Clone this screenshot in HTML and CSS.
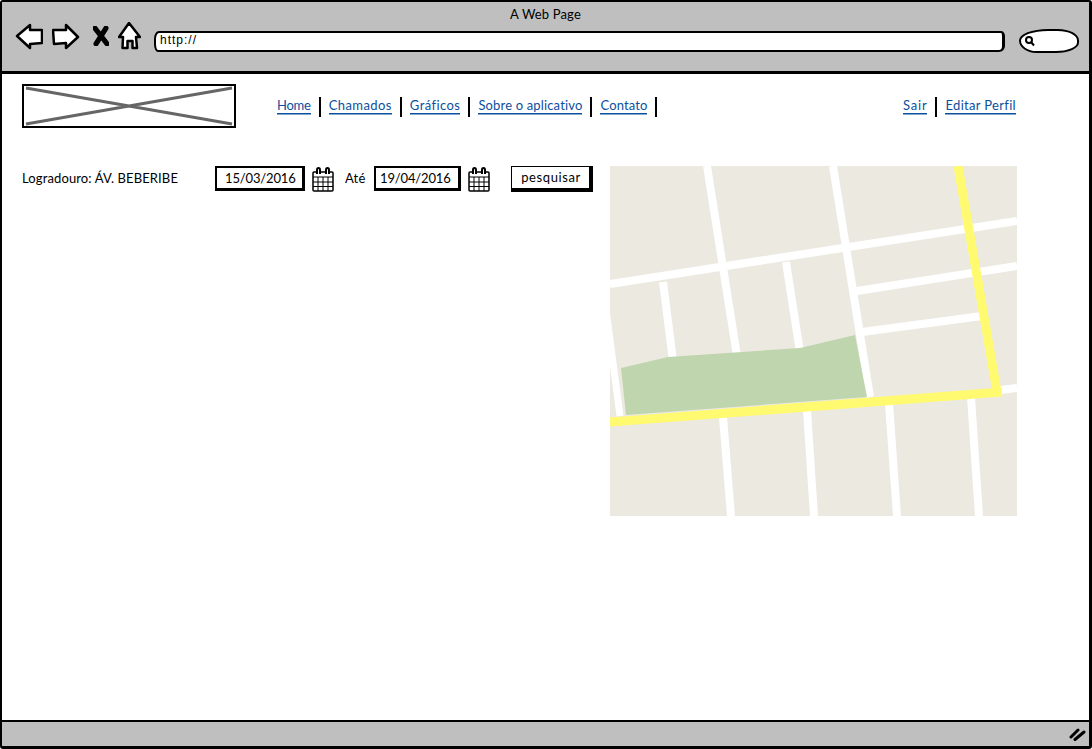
FILE: index.html
```html
<!DOCTYPE html>
<html lang="en">
<head>
    <meta charset="UTF-8">
    <meta name="viewport" content="width=device-width, initial-scale=1.0">
    <title>A Web Page</title>
    <link rel="stylesheet" href="styles.css">
</head>
<body>

    <div class="browser">
        <header class="chrome">
            <div class="page-title">A Web Page</div>
            <div class="toolbar">
                <svg class="icon-arrow" viewBox="0 0 28 27"><path d="M2 13L15 2V7H27V20L15 21V25Z"/></svg>
                <svg class="icon-arrow icon-forward" viewBox="0 0 28 27"><path d="M1 7H14V2L26 14L14 25V20L2 21Z"/></svg>
                <svg class="icon-stop" viewBox="0 0 16 18" preserveAspectRatio="none"><path d="M2 2L14 16M13 2L3 16"/></svg>
                <svg class="icon-home" viewBox="0 0 23 28"><path d="M11 1L1 15H5L4.500 26H9.500V19H14.500V26H19L18 15H22Z"/></svg>
                <div class="url-bar">http://</div>
                <div class="search-box">
                    <svg class="icon-search" viewBox="0 0 12 12"><circle cx="5" cy="5" r="3"/><path d="M7 7L10 10.500"/></svg>
                </div>
            </div>
        </header>

        <main class="content">
            <div class="top-row">
                <div class="logo">
                    <svg viewBox="0 0 210 40" preserveAspectRatio="none"><path d="M2 2L208 38M208 2L2 38"/></svg>
                </div>
                <nav class="nav">
                    <a href="#">Home</a>
                    <a href="#">Chamados</a>
                    <a href="#">Gráficos</a>
                    <a href="#">Sobre o aplicativo</a>
                    <a href="#">Contato</a>
                </nav>
                <nav class="nav nav-right">
                    <a href="#">Sair</a>
                    <a href="#">Editar Perfil</a>
                </nav>
            </div>

            <div class="body-row">
                <form class="filters">
                    <span class="street">Logradouro: ÁV. BEBERIBE</span>
                    <div class="date-box">15/03/2016</div>
                    <svg class="icon-cal" viewBox="0 0 22 25">
                        <rect x="1" y="5" width="20" height="19" rx="1"/>
                        <path d="M1 10H21M1 15H21M1 19.500H21M6 10V24M11 10V24M16 10V24"/>
                        <path class="rings" d="M5 7V3Q5 1 6.500 1T8 3V7M14 7V3Q14 1 15.500 1T17 3V7"/>
                    </svg>
                    <span class="until">Até</span>
                    <div class="date-box date-box-end">19/04/2016</div>
                    <svg class="icon-cal" viewBox="0 0 22 25">
                        <rect x="1" y="5" width="20" height="19" rx="1"/>
                        <path d="M1 10H21M1 15H21M1 19.500H21M6 10V24M11 10V24M16 10V24"/>
                        <path class="rings" d="M5 7V3Q5 1 6.500 1T8 3V7M14 7V3Q14 1 15.500 1T17 3V7"/>
                    </svg>
                    <button type="button" class="search-btn">pesquisar</button>
                </form>

                <svg class="map" viewBox="0 0 407 350">
                    <rect class="land" width="407" height="350"/>
                    <path class="road" d="M0 118L407 55M97 0L127 190M223 0L260 231M53 116L63 195M176 96L190 186M247 125L407 100M252 166L372 150M390 224L407 222M113 251L121 350M197 244L204 350M279 237L287 350M361 231L369 350"/>
                    <path class="road road-thin" d="M-4 144L10 250"/>
                    <path class="park" d="M11 202L58 191L190 182L245 169L257 231L16 249Z"/>
                    <path class="highway" d="M348 0L387 226M0 256L392 226"/>
                </svg>
            </div>
        </main>

        <footer class="status-bar">
            <svg class="icon-grip" viewBox="0 0 17 13"><path d="M2 9L9 2M6 11.500L15 4"/></svg>
        </footer>
    </div>

</body>
</html>
```

FILE: styles.css
```css
* {
    box-sizing: border-box;
}
body {
    margin: 0;
    font-family: "Lato", "Open Sans", sans-serif;
    font-size: 13px;
    color: #000;
    background-color: #fff;
}
svg {
    display: block;
    flex: none;
}
.browser {
    display: flex;
    flex-direction: column;
    height: 749px;
    border: solid #000;
    border-width: 2px 3px 3px 2px;
    border-radius: 3px;
}

/* browser chrome */
.chrome {
    height: 72px;
    padding-top: 5px;
    background-color: #bfbfbf;
    border-bottom: 3px solid #000;
}
.page-title {
    text-align: center;
    line-height: 14px;
    letter-spacing: 0.15px;
}
.toolbar {
    display: flex;
    align-items: center;
    height: 30px;
    padding-left: 13px;
}
.toolbar svg path, .toolbar svg circle {
    fill: #fff;
    stroke: #000;
    stroke-width: 2.500;
    stroke-linejoin: round;
}
.icon-arrow {
    width: 28px;
    height: 27px;
}
.icon-forward {
    margin-left: 9px;
}
.icon-stop {
    width: 16px;
    height: 20px;
    margin-left: 13px;
}
.toolbar .icon-stop path {
    fill: none;
    stroke-width: 5;
    stroke-linecap: round;
}
.icon-home {
    width: 23px;
    height: 28px;
    margin-left: 9px;
}
.url-bar {
    width: 851px;
    height: 21px;
    margin: 10px 0 0 13px;
    padding-left: 4px;
    background-color: #fff;
    border: 2px solid #000;
    border-width: 2px 3px 2.500px 2.500px;
    border-radius: 5px 4px 6px 4px / 8px 5px 6px 8px;
    font-family: "Liberation Sans", Arial, sans-serif;
    font-size: 12px;
    line-height: 15px;
    letter-spacing: 1px;
}
.search-box {
    display: flex;
    align-items: center;
    width: 60px;
    height: 24px;
    margin: 10px 0 0 14px;
    padding-left: 3px;
    background-color: #fff;
    border: 2.500px solid #000;
    border-radius: 30px 22px 24px 18px / 12px 12px 11px 13px;
}
.icon-search {
    width: 12px;
    height: 12px;
}
.toolbar .icon-search path, .toolbar .icon-search circle {
    fill: none;
    stroke-width: 2;
}

/* page */
.content {
    flex: 1;
    padding: 10px 0 0 20px;
}
.top-row {
    display: flex;
    align-items: flex-start;
}
.logo {
    width: 214px;
    height: 44px;
    background-color: #fff;
    border: 2px solid #000;
}
.logo svg {
    width: 100%;
    height: 100%;
}
.logo path {
    fill: none;
    stroke: #666;
    stroke-width: 3;
}
.nav {
    display: flex;
    margin: 13px 0 0 41px;
}
.nav a {
    height: 20px;
    padding-right: 8px;
    margin-right: 8px;
    border-right: 2px solid #000;
    color: #0b4f9e;
    line-height: 17px;
    text-decoration: none;
    background: linear-gradient(#0b4f9e, #0b4f9e) no-repeat left 16px / calc(100% - 8px) 1.500px;
}
.nav a:nth-child(1) {
    letter-spacing: -0.25px;
}
.nav a:nth-child(2), .nav a:nth-child(3) {
    letter-spacing: 0.42px;
}
.nav a:nth-child(4) {
    letter-spacing: 0.16px;
}
.nav a:nth-child(5) {
    letter-spacing: 0.12px;
}
.nav-right {
    margin-left: auto;
    margin-right: 73px;
}
.nav-right a:nth-child(1) {
    letter-spacing: 0.8px;
}
.nav-right a:nth-child(2) {
    padding-right: 0;
    margin-right: 0;
    border-right: none;
    background-size: 100% 1.500px;
    letter-spacing: 0.32px;
}
.body-row {
    display: flex;
    align-items: flex-start;
    margin-top: 38px;
}
.filters {
    display: flex;
    align-items: flex-start;
    width: 588px;
}
.street {
    width: 193px;
    margin-top: 4px;
    letter-spacing: 0.12px;
}
.until {
    width: 29px;
    margin: 4px 0 0 11px;
    letter-spacing: 0.2px;
}
.date-box {
    width: 90px;
    height: 25px;
    padding-left: 8px;
    border: solid #000;
    border-width: 2px 3.500px 3.500px 2px;
    line-height: 21px;
    letter-spacing: -0.15px;
}
.date-box-end {
    width: 87px;
    padding-left: 4px;
}
.icon-cal {
    width: 22px;
    height: 25px;
    margin: 1px 0 0 7px;
}
.icon-cal rect, .icon-cal path {
    fill: none;
    stroke: #000;
    stroke-width: 1;
}
.icon-cal rect {
    stroke-width: 1.500;
}
.icon-cal .rings {
    fill: #fff;
    stroke-width: 2;
}
.search-btn {
    width: 82px;
    height: 26px;
    margin-left: 21px;
    padding: 0 1px 2px 2px;
    background-color: #fff;
    border: solid #000;
    border-width: 1.500px 4px 4px 1.500px;
    font-family: inherit;
    font-size: 13px;
    letter-spacing: 0.6px;
}
.map {
    width: 407px;
    height: 350px;
}
.land {
    fill: #ece9e1;
}
.road {
    fill: none;
    stroke: #fff;
    stroke-width: 8;
}
.road-thin {
    stroke-width: 7;
}
.park {
    fill: #bfd5ae;
}
.highway {
    fill: none;
    stroke: #fffa70;
    stroke-width: 9;
}

/* bottom bar */
.status-bar {
    display: flex;
    justify-content: flex-end;
    align-items: center;
    height: 26px;
    padding-right: 3px;
    background-color: #bfbfbf;
    border-top: 2.500px solid #000;
}
.icon-grip {
    width: 17px;
    height: 13px;
}
.icon-grip path {
    fill: none;
    stroke: #000;
    stroke-width: 3;
    stroke-linecap: round;
}
```
